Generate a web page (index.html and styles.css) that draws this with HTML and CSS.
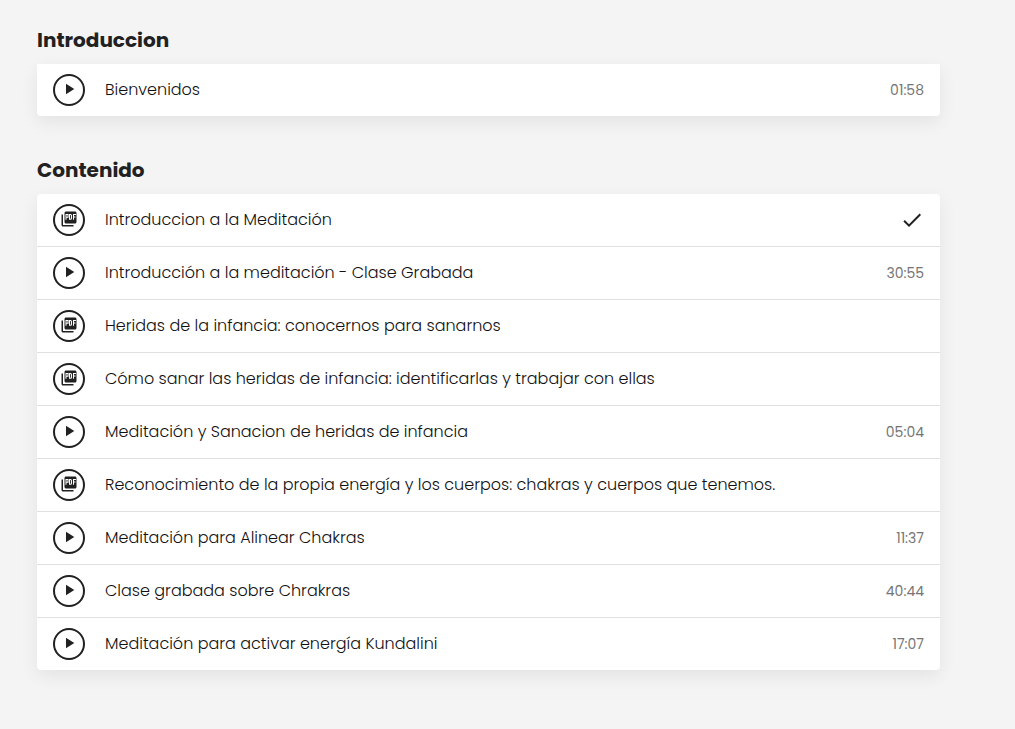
FILE: index.html
```html
<!DOCTYPE html>
<html lang="es">

<head>
    <meta charset="UTF-8">
    <meta name="viewport" content="width=device-width, initial-scale=1.0">
    <title>Contenido del curso</title>

    <link rel="stylesheet" href="styles.css">
</head>

<body>
    <!-- icons -->
    <svg class="sprite" aria-hidden="true">
        <symbol id="icon-play" viewBox="0 0 24 24">
            <path d="M8 5v14l11-7z" />
        </symbol>
        <symbol id="icon-pdf" viewBox="0 0 24 24">
            <path d="M20 2H8c-1.100 0-2 .9-2 2v12c0 1.100.9 2 2 2h12c1.100 0 2-.9 2-2V4c0-1.100-.9-2-2-2zM4 6H2v14c0 1.100.9 2 2 2h14v-2H4V6z" />
            <path class="pdf-letters" d="M8 13V6h2.700v3.700H8M12.700 6v6.200h1.300q1.300 0 1.300-1.300V7.300Q15.300 6 14 6zM18 13V6h3.300M18 9.300h2.700" />
        </symbol>
        <symbol id="icon-check" viewBox="0 0 24 24">
            <path d="M9 16.170L4.830 12l-1.420 1.410L9 19 21 7l-1.410-1.410z" />
        </symbol>
    </svg>

    <main class="syllabus">
        <section class="section">
            <h2 class="section-title">Introduccion</h2>
            <ul class="lessons lessons-first">
                <li>
                    <a class="lesson" href="#">
                        <span class="lesson-icon"><svg><use href="#icon-play" /></svg></span>
                        <span class="lesson-name">Bienvenidos</span>
                        <span class="lesson-time">01:58</span>
                    </a>
                </li>
            </ul>
        </section>

        <section class="section">
            <h2 class="section-title">Contenido</h2>
            <ul class="lessons">
                <li>
                    <a class="lesson" href="#">
                        <span class="lesson-icon"><svg><use href="#icon-pdf" /></svg></span>
                        <span class="lesson-name">Introduccion a la Meditación</span>
                        <svg class="lesson-check" role="img" aria-label="Completada"><use href="#icon-check" /></svg>
                    </a>
                </li>
                <li>
                    <a class="lesson" href="#">
                        <span class="lesson-icon"><svg><use href="#icon-play" /></svg></span>
                        <span class="lesson-name">Introducción a la meditación - Clase Grabada</span>
                        <span class="lesson-time">30:55</span>
                    </a>
                </li>
                <li>
                    <a class="lesson" href="#">
                        <span class="lesson-icon"><svg><use href="#icon-pdf" /></svg></span>
                        <span class="lesson-name">Heridas de la infancia: conocernos para sanarnos</span>
                    </a>
                </li>
                <li>
                    <a class="lesson" href="#">
                        <span class="lesson-icon"><svg><use href="#icon-pdf" /></svg></span>
                        <span class="lesson-name">Cómo sanar las heridas de infancia: identificarlas y trabajar con ellas</span>
                    </a>
                </li>
                <li>
                    <a class="lesson" href="#">
                        <span class="lesson-icon"><svg><use href="#icon-play" /></svg></span>
                        <span class="lesson-name">Meditación y Sanacion de heridas de infancia</span>
                        <span class="lesson-time">05:04</span>
                    </a>
                </li>
                <li>
                    <a class="lesson" href="#">
                        <span class="lesson-icon"><svg><use href="#icon-pdf" /></svg></span>
                        <span class="lesson-name">Reconocimiento de la propia energía y los cuerpos: chakras y cuerpos que tenemos.</span>
                    </a>
                </li>
                <li>
                    <a class="lesson" href="#">
                        <span class="lesson-icon"><svg><use href="#icon-play" /></svg></span>
                        <span class="lesson-name">Meditación para Alinear Chakras</span>
                        <span class="lesson-time">11:37</span>
                    </a>
                </li>
                <li>
                    <a class="lesson" href="#">
                        <span class="lesson-icon"><svg><use href="#icon-play" /></svg></span>
                        <span class="lesson-name">Clase grabada sobre Chrakras</span>
                        <span class="lesson-time">40:44</span>
                    </a>
                </li>
                <li>
                    <a class="lesson" href="#">
                        <span class="lesson-icon"><svg><use href="#icon-play" /></svg></span>
                        <span class="lesson-name">Meditación para activar energía Kundalini</span>
                        <span class="lesson-time">17:07</span>
                    </a>
                </li>
            </ul>
        </section>
    </main>
</body>

</html>
```

FILE: styles.css
```css
*,
*::before,
*::after {
    margin: 0;
    padding: 0;
    box-sizing: border-box;
}

body {
    background-color: #f4f4f4;
    color: #212121;
    font-family: Poppins, Inter, sans-serif;
    font-size: 16px;
    line-height: 24px;
}

.sprite {
    display: none;
}

.syllabus {
    padding: 24px 75px 24px 37px;
}

.section {
    margin-bottom: 38px;
}

.section-title {
    margin-bottom: 8px;
    font-size: 20px;
    font-weight: 700;
    line-height: 32px;
}

/* lessons card */

.lessons {
    list-style: none;
    border-radius: 4px;
    background-color: #fff;
    box-shadow: 0 6px 18px rgba(0, 0, 0, 0.07);
}

.lessons-first {
    border-radius: 0 0 4px 4px;
}

.lessons li + li {
    border-top: 1px solid #e0e0e0;
}

.lesson {
    display: flex;
    align-items: center;
    min-height: 52px;
    padding: 0 16px;
    color: inherit;
    text-decoration: none;
}

.lesson-icon {
    display: flex;
    flex-shrink: 0;
    align-items: center;
    justify-content: center;
    width: 32px;
    height: 32px;
    margin-right: 20px;
    padding-bottom: 2px;
    border: 2px solid #212121;
    border-radius: 50%;
}

.lesson-icon svg {
    width: 18px;
    height: 18px;
    fill: #212121;
}

.pdf-letters {
    fill: none;
    stroke: #fff;
    stroke-width: 1.4;
}

.lesson-name {
    flex-grow: 1;
    color: #111;
    font-weight: 300;
}

.lesson-time {
    margin-left: 16px;
    color: #757575;
    font-size: 14px;
    line-height: 22px;
}

.lesson-check {
    flex-shrink: 0;
    width: 24px;
    height: 24px;
    margin-left: 16px;
    fill: #212121;
}
```
